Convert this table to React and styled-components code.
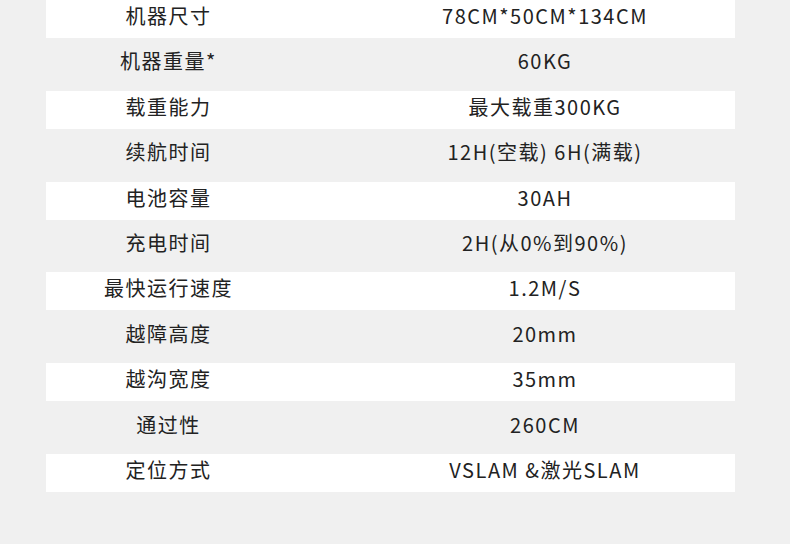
import React from "react";
import styled, { createGlobalStyle } from "styled-components";

const GlobalStyle = createGlobalStyle`
  html, body {
    margin: 0;
    padding: 0;
    background: #ffffff;
  }
`;

const Page = styled.div`
  height: 544px;
  background-color: #f0f0f0;
  padding-left: 46px;
  box-sizing: border-box;
  overflow: hidden;
`;

const Table = styled.div`
  width: 689px;
  display: flex;
  flex-direction: column;
  gap: 7.4px;
`;

const Row = styled.div`
  height: 38px;
  display: grid;
  grid-template-columns: 245px 64px 380px;
  align-items: center;
  background-color: ${(p) => (p.$light ? "#ffffff" : "transparent")};
  font-family: "Noto Sans CJK SC", "Noto Sans", sans-serif;
  font-size: 20px;
  font-weight: 400;
  letter-spacing: 1.5px;
  color: #222222;
`;

const Label = styled.div`
  grid-column: 1;
  text-align: center;
  line-height: 32px;
  padding-bottom: 6px;
`;

const Value = styled.div`
  grid-column: 3;
  text-align: center;
  line-height: 32px;
  padding-bottom: 6px;
`;

const specs = [
  ["机器尺寸", "78CM*50CM*134CM"],
  ["机器重量*", "60KG"],
  ["载重能力", "最大载重300KG"],
  ["续航时间", "12H(空载) 6H(满载)"],
  ["电池容量", "30AH"],
  ["充电时间", "2H(从0%到90%)"],
  ["最快运行速度", "1.2M/S"],
  ["越障高度", "20mm"],
  ["越沟宽度", "35mm"],
  ["通过性", "260CM"],
  ["定位方式", "VSLAM &激光SLAM"],
];

const App = () => {
  return (
    <>
      <GlobalStyle />
      <Page>
        <Table>
          {specs.map(([label, value], i) => (
            <Row key={label} $light={i % 2 === 0}>
              <Label>{label}</Label>
              <Value>{value}</Value>
            </Row>
          ))}
        </Table>
      </Page>
    </>
  );
};

export default App;
